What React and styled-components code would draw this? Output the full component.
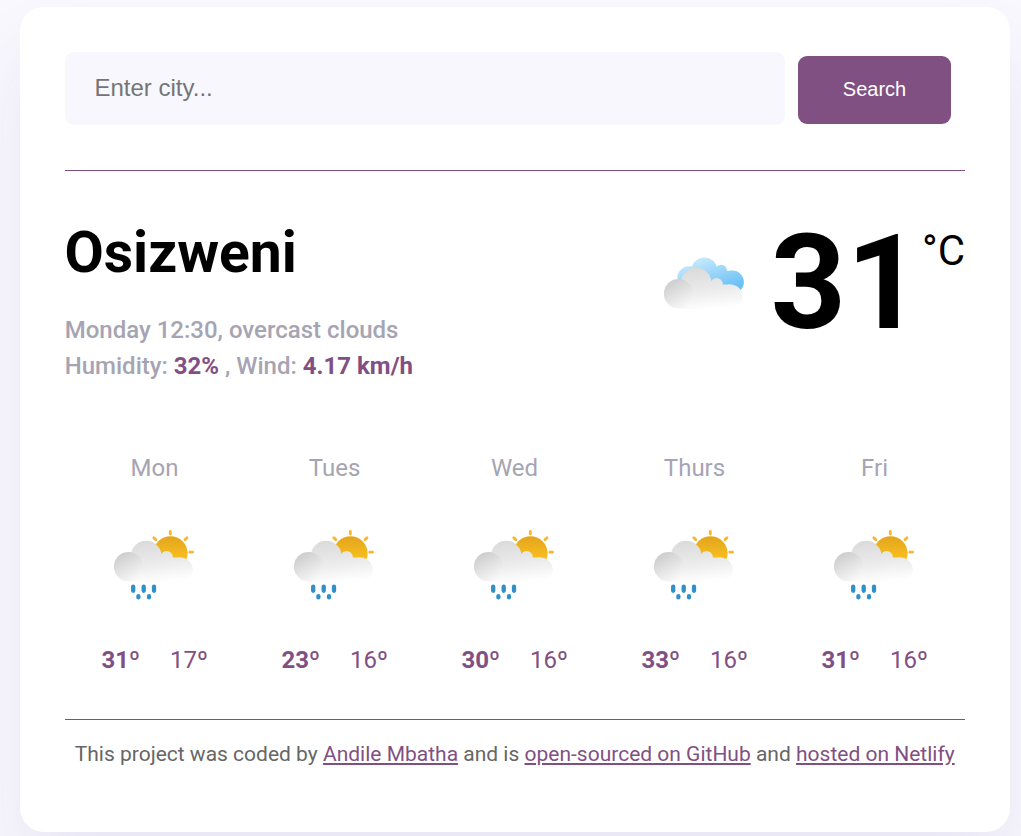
import React from "react";
import styled, { createGlobalStyle } from "styled-components";

const accent = "#815083";

const GlobalStyle = createGlobalStyle`
  * { box-sizing: border-box; }
  body {
    margin: 0;
    background: #f9f8fe;
    font-family: Roboto, "Liberation Sans", sans-serif;
  }
`;

const Page = styled.main`
  min-height: 100vh;
  padding: 7px 0 0 20px;
`;

const Card = styled.div`
  width: 990px;
  height: 825px;
  padding: 45px;
  border-radius: 24px;
  background: #fff;
  box-shadow: 0 45px 75px rgba(65, 50, 130, 0.09);
`;

const SearchForm = styled.form`
  display: flex;
  align-items: flex-start;
  gap: 13px;
  height: 119px;
  border-bottom: 1px solid ${accent};
`;

const CityInput = styled.input`
  width: 720px;
  height: 73px;
  padding: 0 30px 2px 29.5px;
  border: 0;
  border-radius: 9px;
  background: #f8f7fe;
  font: 24px "Liberation Sans", Arial, sans-serif;
  &::placeholder { color: #757575; opacity: 1; }
`;

const SearchButton = styled.button`
  width: 153px;
  height: 68px;
  margin-top: 4px;
  padding: 0 0 2px;
  border: 0;
  border-radius: 9px;
  background: ${accent};
  color: #fff;
  font: 20px "Liberation Sans", Arial, sans-serif;
`;

const Current = styled.section`
  display: flex;
  justify-content: space-between;
  height: 279px;
  padding-top: 45px;
`;

const City = styled.h1`
  margin: 1px 0 0 -0.5px;
  font-size: 57px;
  line-height: 72px;
  font-weight: 700;
`;

const Details = styled.p`
  margin: 23px 0 0 -0.3px;
  color: #a6a4b2;
  font-size: 24px;
  line-height: 36px;
  font-weight: 500;
  strong { color: ${accent}; font-weight: 700; }
`;

const Temperature = styled.div`
  display: flex;
  align-items: flex-start;
`;

const CurrentIcon = styled.div`
  display: flex;
  margin: 35px 25px 0 0;
`;

const Degrees = styled.span`
  margin-top: 1px;
  font-size: 132px;
  line-height: 132px;
  font-weight: 700;
`;

const Unit = styled.span`
  margin-top: 10px;
  font-size: 42px;
  line-height: 50px;
`;

const Forecast = styled.section`
  display: grid;
  grid-template-columns: repeat(5, 1fr);
  height: 224px;
`;

const Day = styled.div`
  display: flex;
  flex-direction: column;
  align-items: center;
  font-size: 24px;
  line-height: 36px;
`;

const DayName = styled.div`
  margin: 0 1px 38px 0;
  color: #a6a4b2;
`;

const Range = styled.div`
  display: flex;
  gap: 30px;
  margin: 38px 0.5px 0 0;
  color: ${accent};
`;

const High = styled.span`font-weight: 700;`;
const Low = styled.span`font-weight: 400;`;

const Footer = styled.footer`
  margin-top: 45px;
  padding: 18px 0.6px 0 0;
  border-top: 1px solid ${accent};
  color: #666;
  font-size: 21px;
  line-height: 32px;
  text-align: center;
  white-space: nowrap;
`;

const Link = styled.a`
  color: ${accent};
  text-decoration: underline;
`;

function WeatherIcon({ id, rain }) {
  return (
    <svg width="82" height="80" viewBox="0 0 82 80" aria-hidden="true">
      <defs>
        <linearGradient id={`${id}-cloud`} gradientUnits="userSpaceOnUse" x1="38" y1="16" x2="43" y2="58">
          <stop offset="0" stopColor="#dadada" />
          <stop offset="0.55" stopColor="#ebebeb" />
          <stop offset="1" stopColor="#fefefe" />
        </linearGradient>
        <linearGradient id={`${id}-puff`} x1="0.15" y1="0.1" x2="0.65" y2="1">
          <stop offset="0" stopColor="#cccccc" />
          <stop offset="1" stopColor="#f8f8f8" />
        </linearGradient>
        <linearGradient id={`${id}-back`} gradientUnits="userSpaceOnUse" x1="38" y1="6" x2="50" y2="42">
          <stop offset="0" stopColor="#c8e9fd" />
          <stop offset="1" stopColor="#6bc1f5" />
        </linearGradient>
        <linearGradient id={`${id}-sun`} x1="0" y1="0" x2="0" y2="1">
          <stop offset="0" stopColor="#e3a41f" />
          <stop offset="0.75" stopColor="#fac31d" />
        </linearGradient>
      </defs>
      {rain ? (
        <>
          <circle cx="56.5" cy="29.3" r="17.1" fill={`url(#${id}-sun)`} />
          <path d="M56.3 7.3v2.8M71 15.8l2-2.1M75.8 28.2h2.8M41.8 15.8l-2-2.1" stroke="#fbb52b" strokeWidth="2.8" strokeLinecap="round" />
        </>
      ) : (
        <g fill={`url(#${id}-back)`}>
          <circle cx="25.2" cy="27" r="11.8" />
          <circle cx="40.4" cy="19.4" r="13" />
          <circle cx="57" cy="19.7" r="6" />
          <circle cx="68.5" cy="31" r="11.4" />
          <path d="M25 22H51V19.7H68.5V42H25Z" />
        </g>
      )}
      <g fill={`url(#${id}-cloud)`}>
        <circle cx="32.2" cy="32" r="15.3" />
        <circle cx="52.6" cy="33.2" r="6.2" />
        <circle cx="66.6" cy="45.8" r="12.2" />
        <path d="M14.5 38H46V33.6H66.6V58H14.5Z" />
      </g>
      <circle cx="14.5" cy="42.7" r="14.7" fill={`url(#${id}-puff)`} />
      {rain && (
        <path d="M19.2 62.6v4.2M29.7 62.6v4.2M40 62.6v4.2M24.4 72.2v1.2M35 72.2v1.2" stroke="#318fc9" strokeWidth="4.3" strokeLinecap="round" />
      )}
    </svg>
  );
}

const days = [
  ["Mon", 31, 17],
  ["Tues", 23, 16],
  ["Wed", 30, 16],
  ["Thurs", 33, 16],
  ["Fri", 31, 16],
];

export default function App() {
  return (
    <>
      <GlobalStyle />
      <Page>
        <Card>
          <SearchForm onSubmit={(event) => event.preventDefault()}>
            <CityInput placeholder="Enter city..." />
            <SearchButton>Search</SearchButton>
          </SearchForm>
          <Current>
            <div>
              <City>Osizweni</City>
              <Details>
                Monday 12:30, overcast clouds
                <br />
                Humidity: <strong>32%</strong> , Wind: <strong>4.17 km/h</strong>
              </Details>
            </div>
            <Temperature>
              <CurrentIcon><WeatherIcon id="current" /></CurrentIcon>
              <Degrees>31</Degrees>
              <Unit>°C</Unit>
            </Temperature>
          </Current>
          <Forecast>
            {days.map(([name, high, low]) => (
              <Day key={name}>
                <DayName>{name}</DayName>
                <WeatherIcon id={name} rain />
                <Range>
                  <High>{high}º</High>
                  <Low>{low}º</Low>
                </Range>
              </Day>
            ))}
          </Forecast>
          <Footer>
            This project was coded by <Link href="#">Andile Mbatha</Link> and is{" "}
            <Link href="#">open-sourced on GitHub</Link> and <Link href="#">hosted on Netlify</Link>
          </Footer>
        </Card>
      </Page>
    </>
  );
}
